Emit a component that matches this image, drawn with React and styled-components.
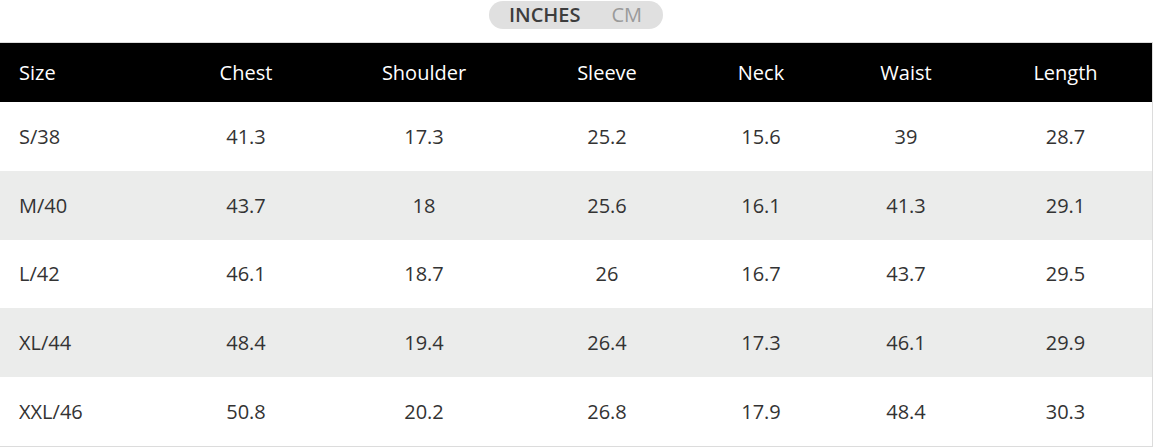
import React, { useState } from 'react';
import styled, { createGlobalStyle } from 'styled-components';

const GlobalStyle = createGlobalStyle`
    html, body {
        margin: 0;
        padding: 0;
        background: #ffffff;
        font-family: 'Open Sans', 'Liberation Sans', Arial, sans-serif;
    }
`;

const Page = styled.div`
    width: 1156px;
`;

const ToggleBar = styled.div`
    display: flex;
    justify-content: center;
    padding: 1px 0 13px 0;
`;

const Toggle = styled.div`
    display: flex;
    align-items: center;
    gap: 31px;
    height: 28px;
    padding: 0 21px 0 20px;
    margin-right: 4px;
    background: #e0e0e0;
    border-radius: 14px;
`;

const ToggleOption = styled.button`
    border: none;
    background: transparent;
    padding: 0;
    font-family: inherit;
    font-size: 20px;
    line-height: 28px;
    cursor: pointer;
    font-weight: ${(props) => (props.active ? 600 : 400)};
    color: ${(props) => (props.active ? '#3d3d3d' : '#9a9a9a')};
`;

const Table = styled.div`
    width: 1152px;
    border: 1px solid #dcdcdc;
    border-left: none;
`;

const columns = '169px 154px 202px 164px 144px 146px 173px';

const HeaderRow = styled.div`
    display: grid;
    grid-template-columns: ${columns};
    height: 59px;
    align-items: center;
    background: #000000;
    color: #ffffff;
    font-size: 20px;
`;

const Row = styled.div`
    display: grid;
    grid-template-columns: ${columns};
    height: 68.8px;
    align-items: center;
    background: ${(props) => (props.striped ? '#ebeceb' : '#ffffff')};
    color: #333333;
    font-size: 20px;
`;

const Cell = styled.div`
    text-align: ${(props) => (props.first ? 'left' : 'center')};
    padding-left: ${(props) => (props.first ? '19px' : '0')};
`;

const headers = ['Size', 'Chest', 'Shoulder', 'Sleeve', 'Neck', 'Waist', 'Length'];

const inches = [
    ['S/38', '41.3', '17.3', '25.2', '15.6', '39', '28.7'],
    ['M/40', '43.7', '18', '25.6', '16.1', '41.3', '29.1'],
    ['L/42', '46.1', '18.7', '26', '16.7', '43.7', '29.5'],
    ['XL/44', '48.4', '19.4', '26.4', '17.3', '46.1', '29.9'],
    ['XXL/46', '50.8', '20.2', '26.8', '17.9', '48.4', '30.3'],
];

const toCm = (rows) =>
    rows.map((r) => [r[0], ...r.slice(1).map((v) => (parseFloat(v) * 2.54).toFixed(1))]);

export default function App() {
    const [unit, setUnit] = useState('in');
    const rows = unit === 'in' ? inches : toCm(inches);

    return (
        <Page>
            <GlobalStyle />
            <ToggleBar>
                <Toggle>
                    <ToggleOption active={unit === 'in'} onClick={() => setUnit('in')}>
                        INCHES
                    </ToggleOption>
                    <ToggleOption active={unit === 'cm'} onClick={() => setUnit('cm')}>
                        CM
                    </ToggleOption>
                </Toggle>
            </ToggleBar>
            <Table>
                <HeaderRow>
                    {headers.map((h, i) => (
                        <Cell key={h} first={i === 0}>
                            {h}
                        </Cell>
                    ))}
                </HeaderRow>
                {rows.map((r, idx) => (
                    <Row key={r[0]} striped={idx % 2 === 1}>
                        {r.map((v, i) => (
                            <Cell key={i} first={i === 0}>
                                {v}
                            </Cell>
                        ))}
                    </Row>
                ))}
            </Table>
        </Page>
    );
}
